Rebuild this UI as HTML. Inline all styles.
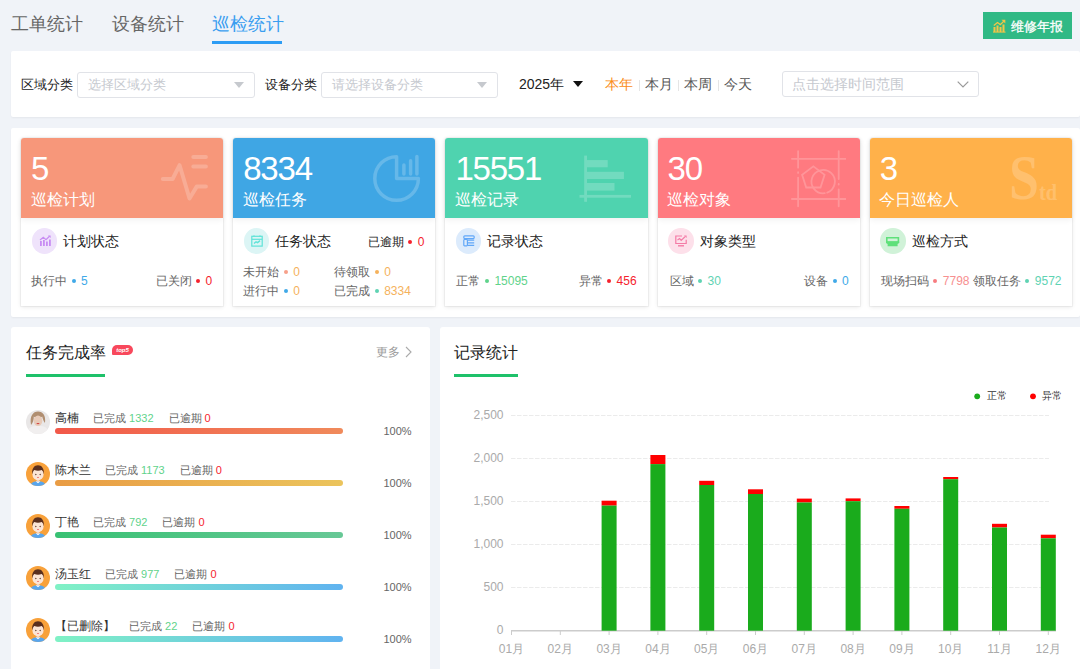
<!DOCTYPE html>
<html><head><meta charset="utf-8">
<style>
*{margin:0;padding:0;box-sizing:border-box}
html,body{width:1080px;height:669px;overflow:hidden}
body{background:#f0f3f8;font-family:"Liberation Sans",sans-serif;position:relative;color:#333}
.a{position:absolute;white-space:nowrap}
.tab{font-size:18px;line-height:24px;color:#666;top:12px}
.panel{position:absolute;background:#fff}
.lbl{font-size:13px;line-height:20px;color:#222;top:75px}
.sel{position:absolute;top:72px;height:26px;border:1px solid #e1e3e8;border-radius:3px;background:#fff}
.ph{position:absolute;left:10px;top:2px;font-size:13px;line-height:20px;color:#c6c9cf;white-space:nowrap}
.tri{position:absolute;width:0;height:0;border-left:5.5px solid transparent;border-right:5.5px solid transparent;border-top:6px solid #c6c9ce}
.q{font-size:14px;line-height:20px;top:74px;color:#555}
.sep{position:absolute;top:80px;width:1px;height:11px;background:#e5e5e5}
.card{position:absolute;top:138px;width:202.2px;height:168px;border-radius:3px 3px 0 0;background:#fff;box-shadow:0 0 0 1px rgba(0,0,0,.035),0 1px 4px rgba(0,0,0,.1)}
.hd{position:absolute;left:0;top:0;width:100%;height:80px;border-radius:3px 3px 0 0;box-shadow:0 2px 6px rgba(0,0,0,.06)}
.num{position:absolute;left:10px;top:12px;font-size:33px;line-height:38px;color:#fff;letter-spacing:-1.2px}
.nm{position:absolute;left:9.5px;top:51px;font-size:16px;line-height:22px;color:#fff;white-space:nowrap}
.ic{position:absolute;left:139px;top:16px}
.cir{position:absolute;left:10.5px;top:90px;width:25.5px;height:25.5px;border-radius:50%}
.cir svg{position:absolute;left:7px;top:7px}
.ttl{position:absolute;left:42px;top:93px;font-size:14px;line-height:20px;color:#222;white-space:nowrap}
.st{position:absolute;font-size:12px;line-height:16px;color:#666;white-space:nowrap}
.dot{display:inline-block;width:4px;height:4px;border-radius:50%;vertical-align:middle;margin:0 5.5px 2.5px 4.5px}
.lrow{font-size:12px;line-height:16px;color:#333}.pn{margin-right:14px}.pl{font-size:11px;color:#666;margin-right:15px}.pl b{font-weight:normal}.pct{font-size:11px;line-height:14px;color:#666}
.ylab{font-size:12px;line-height:16px;color:#aaa;text-align:right}.xlab{width:60px;text-align:center;font-size:12px;line-height:16px;color:#aaa}
</style></head><body>

<!-- tabs -->
<div class="a tab" style="left:11px">工单统计</div>
<div class="a tab" style="left:112px">设备统计</div>
<div class="a tab" style="left:212px;color:#3a9ef0">巡检统计</div>
<div class="a" style="left:212px;top:41px;width:70px;height:3px;background:#2d9cf4"></div>

<!-- button -->
<div class="a" style="left:983px;top:12px;width:89px;height:27px;background:#30b985"></div><svg class="a" style="left:993px;top:19px" width="13" height="14" viewBox="0 0 13 14"><g fill="#f3c546"><rect x="0.5" y="8" width="2" height="5"/><rect x="3.5" y="6.5" width="2" height="6.5"/><rect x="6.5" y="8" width="2" height="5"/><rect x="9.5" y="5.5" width="2" height="7.5"/><rect x="0" y="12.6" width="12.5" height="1"/><path d="M8.5 0.8H12.3V4.6Z"/></g><path d="M0.8 6.5L4.5 3.5L7.3 5.6L11.3 1.8" fill="none" stroke="#f3c546" stroke-width="1.3"/></svg><div class="a" style="left:1011px;top:18px;font-size:13px;line-height:17px;color:#fff;-webkit-text-stroke:0.3px #fff">维修年报</div>

<!-- filter panel -->
<div class="panel" style="left:11px;top:51px;width:1069px;height:66px;border-radius:2px;box-shadow:0 1px 2px rgba(0,0,0,.05)"></div>
<div class="a lbl" style="left:21px">区域分类</div>
<div class="sel" style="left:77px;width:178px"><div class="ph">选择区域分类</div><div class="tri" style="left:156px;top:9px"></div></div>
<div class="a lbl" style="left:265px">设备分类</div>
<div class="sel" style="left:321px;width:177px"><div class="ph">请选择设备分类</div><div class="tri" style="left:155px;top:9px"></div></div>
<div class="a q" style="left:519px;color:#222">2025年</div>
<div class="a" style="left:573px;top:81px;width:0;height:0;border-left:5px solid transparent;border-right:5px solid transparent;border-top:6px solid #111"></div>
<div class="a q" style="left:605px;color:#fa8c16">本年</div>
<div class="sep" style="left:639px"></div>
<div class="a q" style="left:645px">本月</div>
<div class="sep" style="left:678px"></div>
<div class="a q" style="left:684px">本周</div>
<div class="sep" style="left:718px"></div>
<div class="a q" style="left:724px">今天</div>
<div class="sel" style="left:782px;top:71px;width:197px;height:26px"><div class="ph" style="font-size:14px;left:8.5px">点击选择时间范围</div><svg style="position:absolute;left:174px;top:9px" width="12" height="7" viewBox="0 0 12 7"><path d="M0.7 0.7L6 6L11.3 0.7" fill="none" stroke="#999" stroke-width="1.2"/></svg></div>

<!-- cards panel -->
<div class="panel" style="left:11px;top:128px;width:1069px;height:189px;border-radius:2px;box-shadow:0 1px 2px rgba(0,0,0,.05)"></div>

<!-- cards -->
<div class="card" style="left:21.0px"><div class="hd" style="background:#f7977a"><svg width="60" height="60" viewBox="0 0 60 60" style="position:absolute;left:133px;top:10px"><g fill="none" stroke="#fff" opacity="0.2" stroke-width="4" stroke-linecap="round" stroke-linejoin="round"><path d="M39.3 9H51.9M39.3 18.4H51.9"/><path d="M8.8 31H18.6L25.6 17.2L35.5 50.5L42.7 38.6H51.9"/></g></svg><div class="num">5</div><div class="nm">巡检计划</div></div><div class="cir" style="background:#efe3fb"><svg width="12" height="12" viewBox="0 0 12 12"><g fill="#c88cf3"><rect x="1" y="6" width="1.8" height="5"/><rect x="4" y="5" width="1.8" height="6"/><rect x="7" y="6.5" width="1.8" height="4.5"/><rect x="10" y="4.5" width="1.8" height="6.5"/></g><path d="M1 5L4.3 2.2L7 4.6L10.5 1.2" fill="none" stroke="#c88cf3" stroke-width="1.2"/><path d="M9 0.5H11.6V3Z" fill="#c88cf3"/></svg></div><div class="ttl">计划状态</div><div class="st" style="left:10px;top:135px">执行中<span class="dot" style="background:#40a9e8"></span><span style="color:#40a9e8">5</span></div><div class="st" style="right:11px;top:135px">已关闭<span class="dot" style="background:#f5222d"></span><span style="color:#f5222d">0</span></div></div>
<div class="card" style="left:233.2px"><div class="hd" style="background:#3fa6e4"><svg width="60" height="60" viewBox="0 0 60 60" style="position:absolute;left:135px;top:10px"><g fill="none" stroke="#fff" opacity="0.2" stroke-width="3.5" stroke-linecap="round" stroke-linejoin="round"><path d="M28.6 8.7A21.8 21.8 0 1 0 50.4 30.5H28.6V8.7"/><path d="M35.9 17V26M42.6 12.7V26M48.9 8.6V26"/></g></svg><div class="num">8334</div><div class="nm">巡检任务</div></div><div class="cir" style="background:#dcf5f5"><svg width="12" height="12" viewBox="0 0 12 12"><g fill="none" stroke="#5fe3d8" stroke-width="1.2"><rect x="0.8" y="1.3" width="10.4" height="9.8"/><path d="M0.8 4.3H11.2"/><path d="M3 8.6L5 6.8L6.6 7.6L9 5.6" stroke-width="1.4"/></g><path d="M3 0.3V1.8M9 0.3V1.8" stroke="#5fe3d8" stroke-width="1"/></svg></div><div class="ttl">任务状态</div><div class="st" style="right:11px;top:96px;color:#222">已逾期<span class="dot" style="background:#f5222d"></span><span style="color:#f5222d">0</span></div><div class="st" style="left:10px;top:126px">未开始<span class="dot" style="background:#f7a08a"></span><span style="color:#f5b25c">0</span></div><div class="st" style="left:101px;top:126px">待领取<span class="dot" style="background:#f5b25c"></span><span style="color:#f5b25c">0</span></div><div class="st" style="left:10px;top:145px">进行中<span class="dot" style="background:#40a9e8"></span><span style="color:#f5b25c">0</span></div><div class="st" style="left:101px;top:145px">已完成<span class="dot" style="background:#5fd3b3"></span><span style="color:#f5b25c">8334</span></div></div>
<div class="card" style="left:445.4px"><div class="hd" style="background:#4fd3af"><svg width="60" height="60" viewBox="0 0 60 60" style="position:absolute;left:130px;top:10px"><g fill="#fff" opacity="0.2"><rect x="9.2" y="7.6" width="2.8" height="46.2"/><rect x="4.5" y="46.9" width="51.5" height="2.8"/><rect x="12" y="12.1" width="20.7" height="7.2"/><rect x="12" y="23.8" width="36.9" height="7.2"/><rect x="12" y="35" width="27.5" height="7.6"/></g></svg><div class="num">15551</div><div class="nm">巡检记录</div></div><div class="cir" style="background:#dcebfc"><svg width="12" height="12" viewBox="0 0 12 12"><g fill="none" stroke="#62a8f8" stroke-width="1.2"><rect x="0.8" y="0.8" width="10.4" height="2.8" rx="1"/><rect x="0.8" y="4.5" width="3.6" height="6.3" rx="0.8"/><path d="M4.4 5.2H11.2M4.4 7.8H11.2M4.4 10.4H11.2"/></g></svg></div><div class="ttl">记录状态</div><div class="st" style="left:11px;top:135px">正常<span class="dot" style="background:#5fd38b"></span><span style="color:#5fd38b">15095</span></div><div class="st" style="right:11px;top:135px">异常<span class="dot" style="background:#f5222d"></span><span style="color:#f5222d">456</span></div></div>
<div class="card" style="left:657.6px"><div class="hd" style="background:#ff7a80"><svg width="60" height="60" viewBox="0 0 60 60" style="position:absolute;left:128px;top:10px"><g fill="none" stroke="#fff" opacity="0.2" stroke-width="1.8" stroke-linecap="round"><path d="M5.9 10.8H60.1M5.9 51H60.1M12.1 3.1V19.7M12.1 24.2V24.9M12.1 29.6V58.3M52.7 3.1V31M52.7 35.9V36.6M52.7 41.3V58.3"/><path d="M27.4 18.4L38.6 26.9L34.5 39.5H20.2L16.1 26.9Z"/><path d="M38.8 45.2A11.7 11.7 0 1 1 41.2 44.6"/></g></svg><div class="num">30</div><div class="nm">巡检对象</div></div><div class="cir" style="background:#fde0ea"><svg width="12" height="12" viewBox="0 0 12 12"><g fill="none" stroke="#f47ba6" stroke-width="1.2"><path d="M7 1H0.8V8.5H11.2V4.8"/><path d="M2.5 5L4.6 3.6L6.2 5.4L10 1.8"/><path d="M3 10.8H9" stroke-width="1.4"/></g><path d="M9 0.5H11.6V3Z" fill="#f47ba6"/></svg></div><div class="ttl">对象类型</div><div class="st" style="left:12px;top:135px">区域<span class="dot" style="background:#5fd3b3"></span><span style="color:#5fd3b3">30</span></div><div class="st" style="right:11px;top:135px">设备<span class="dot" style="background:#40a9e8"></span><span style="color:#40a9e8">0</span></div></div>
<div class="card" style="left:869.8px"><div class="hd" style="background:#ffb14a"><div style="position:absolute;left:140px;top:0;width:60px;height:80px;font-family:'Liberation Serif',serif;color:rgba(255,255,255,0.2)"><span style="position:absolute;left:-0.5px;top:8px;font-size:64px;line-height:64px;font-weight:bold;transform:scaleX(0.84);transform-origin:0 0">S</span><span style="position:absolute;left:29.5px;top:42px;font-size:24px;line-height:24px;font-weight:bold;transform:scaleX(0.85);transform-origin:0 0">td</span></div><div class="num">3</div><div class="nm">今日巡检人</div></div><div class="cir" style="background:#d0f2d8"><svg width="14" height="10" viewBox="0 0 14 10" style="left:6px;top:8.5px"><path d="M0.8 0.8H12.4V5H0.8Z" fill="none" stroke="#5ee07a" stroke-width="1.6"/><path d="M0 4.4H13.2V6L11.6 7V9.2H1.6V7L0 6Z" fill="#5ee07a"/></svg></div><div class="ttl">巡检方式</div><div class="st" style="left:11px;top:135px">现场扫码<span class="dot" style="background:#f77c80"></span><span style="color:#f79090">7798</span> 领取任务<span class="dot" style="background:#5fd3b3"></span><span style="color:#5fd3b3">9572</span></div></div>

<!-- bottom panels -->
<div class="panel" style="left:11px;top:327px;width:419px;height:350px;border-radius:3px"></div>
<div class="panel" style="left:440px;top:327px;width:645px;height:350px;border-radius:3px"></div>

<!-- left list -->
<div class="a" style="left:26px;top:343px;font-size:16px;line-height:20px;color:#222">任务完成率</div>
<div class="a" style="left:112px;top:345px;width:21px;height:10px;border-radius:5px 5px 5px 1px;background:#f8485c;color:#fff;font-size:6px;line-height:10px;text-align:center;font-style:italic;font-weight:bold">top5</div>
<div class="a" style="left:26px;top:374px;width:79px;height:3px;background:#1ec16a"></div>
<div class="a" style="left:376px;top:344px;font-size:12px;line-height:16px;color:#999">更多</div>
<svg class="a" style="left:404px;top:346px" width="9" height="12" viewBox="0 0 9 12"><path d="M2 1L7 6L2 11" fill="none" stroke="#aaa" stroke-width="1.1"/></svg>
<div class="a" style="left:26px;top:409.7px;width:24px;height:24px"><svg width="24" height="24" viewBox="0 0 24 24"><defs><clipPath id="cp"><circle cx="12" cy="12" r="12"/></clipPath></defs><g clip-path="url(#cp)"><rect width="24" height="24" fill="#e9e7e7"/><path d="M-1 25C1 18 6 15.5 12 16C18 15.5 23 18 25 25Z" fill="#f1efef"/><path d="M5 15C3.5 6 7 1.5 12 1.5C17 1.5 20 5.5 19 13C17.5 11 16.5 8.5 16.2 6.5C14 8.5 10 8.5 7.8 6.5C7.8 10 7 13 5 15Z" fill="#b08e70"/><ellipse cx="12" cy="10.8" rx="4.3" ry="5.2" fill="#e8cbb9"/><path d="M10.7 13.6H13.3" stroke="#d23a3a" stroke-width="1"/></g></svg></div>
<div class="a lrow" style="left:55px;top:409.7px"><span class="pn">高楠</span><span class="pl">已完成 <b style="color:#5fd38b">1332</b></span><span class="pl">已逾期 <b style="color:#f5222d">0</b></span></div>
<div class="a" style="left:55px;top:428.0px;width:288px;height:6px;border-radius:3px;background:linear-gradient(90deg,#f25849,#f08a5b)"></div>
<div class="a pct" style="left:383.5px;top:423.7px">100%</div>
<div class="a" style="left:26px;top:461.7px;width:24px;height:24px"><svg width="24" height="24" viewBox="0 0 24 24"><defs><clipPath id="cb1"><circle cx="12" cy="12" r="12"/></clipPath></defs><g clip-path="url(#cb1)"><rect width="24" height="24" fill="#f8a13a"/><path d="M4 24.5C4.5 20.5 8 19.3 12 19.3C16 19.3 19.5 20.5 20 24.5Z" fill="#58a6ee"/><path d="M9.6 19.2L12 21.3L14.4 19.2Z" fill="#fff"/><rect x="10.6" y="16" width="2.8" height="3.5" fill="#f1c9b0"/><ellipse cx="12" cy="12.2" rx="5.6" ry="6.2" fill="#fbe5d6"/><path d="M6.2 12.5C5.5 6.5 8.3 3.2 12 3.2C15.7 3.2 18.5 6.5 17.8 12.5C17.3 9.5 16.5 8.3 15.6 8C13.5 9 10.5 9 8.4 8C7.5 8.5 6.7 9.8 6.2 12.5Z" fill="#5a2f1e"/><circle cx="9.8" cy="12.6" r="0.75" fill="#6b4a3a"/><circle cx="14.2" cy="12.6" r="0.75" fill="#6b4a3a"/><path d="M11 15.3Q12 16 13 15.3" stroke="#e66" stroke-width="0.8" fill="none"/></g></svg></div>
<div class="a lrow" style="left:55px;top:461.7px"><span class="pn">陈木兰</span><span class="pl">已完成 <b style="color:#5fd38b">1173</b></span><span class="pl">已逾期 <b style="color:#f5222d">0</b></span></div>
<div class="a" style="left:55px;top:480.0px;width:288px;height:6px;border-radius:3px;background:linear-gradient(90deg,#e99c44,#ebc45c)"></div>
<div class="a pct" style="left:383.5px;top:475.7px">100%</div>
<div class="a" style="left:26px;top:513.7px;width:24px;height:24px"><svg width="24" height="24" viewBox="0 0 24 24"><defs><clipPath id="cb2"><circle cx="12" cy="12" r="12"/></clipPath></defs><g clip-path="url(#cb2)"><rect width="24" height="24" fill="#f8a13a"/><path d="M4 24.5C4.5 20.5 8 19.3 12 19.3C16 19.3 19.5 20.5 20 24.5Z" fill="#58a6ee"/><path d="M9.6 19.2L12 21.3L14.4 19.2Z" fill="#fff"/><rect x="10.6" y="16" width="2.8" height="3.5" fill="#f1c9b0"/><ellipse cx="12" cy="12.2" rx="5.6" ry="6.2" fill="#fbe5d6"/><path d="M6.2 12.5C5.5 6.5 8.3 3.2 12 3.2C15.7 3.2 18.5 6.5 17.8 12.5C17.3 9.5 16.5 8.3 15.6 8C13.5 9 10.5 9 8.4 8C7.5 8.5 6.7 9.8 6.2 12.5Z" fill="#5a2f1e"/><circle cx="9.8" cy="12.6" r="0.75" fill="#6b4a3a"/><circle cx="14.2" cy="12.6" r="0.75" fill="#6b4a3a"/><path d="M11 15.3Q12 16 13 15.3" stroke="#e66" stroke-width="0.8" fill="none"/></g></svg></div>
<div class="a lrow" style="left:55px;top:513.7px"><span class="pn">丁艳</span><span class="pl">已完成 <b style="color:#5fd38b">792</b></span><span class="pl">已逾期 <b style="color:#f5222d">0</b></span></div>
<div class="a" style="left:55px;top:532.0px;width:288px;height:6px;border-radius:3px;background:linear-gradient(90deg,#38c173,#67c896)"></div>
<div class="a pct" style="left:383.5px;top:527.7px">100%</div>
<div class="a" style="left:26px;top:565.7px;width:24px;height:24px"><svg width="24" height="24" viewBox="0 0 24 24"><defs><clipPath id="cb3"><circle cx="12" cy="12" r="12"/></clipPath></defs><g clip-path="url(#cb3)"><rect width="24" height="24" fill="#f8a13a"/><path d="M4 24.5C4.5 20.5 8 19.3 12 19.3C16 19.3 19.5 20.5 20 24.5Z" fill="#58a6ee"/><path d="M9.6 19.2L12 21.3L14.4 19.2Z" fill="#fff"/><rect x="10.6" y="16" width="2.8" height="3.5" fill="#f1c9b0"/><ellipse cx="12" cy="12.2" rx="5.6" ry="6.2" fill="#fbe5d6"/><path d="M6.2 12.5C5.5 6.5 8.3 3.2 12 3.2C15.7 3.2 18.5 6.5 17.8 12.5C17.3 9.5 16.5 8.3 15.6 8C13.5 9 10.5 9 8.4 8C7.5 8.5 6.7 9.8 6.2 12.5Z" fill="#5a2f1e"/><circle cx="9.8" cy="12.6" r="0.75" fill="#6b4a3a"/><circle cx="14.2" cy="12.6" r="0.75" fill="#6b4a3a"/><path d="M11 15.3Q12 16 13 15.3" stroke="#e66" stroke-width="0.8" fill="none"/></g></svg></div>
<div class="a lrow" style="left:55px;top:565.7px"><span class="pn">汤玉红</span><span class="pl">已完成 <b style="color:#5fd38b">977</b></span><span class="pl">已逾期 <b style="color:#f5222d">0</b></span></div>
<div class="a" style="left:55px;top:584.0px;width:288px;height:6px;border-radius:3px;background:linear-gradient(90deg,#80f2c5,#60b3f0)"></div>
<div class="a pct" style="left:383.5px;top:579.7px">100%</div>
<div class="a" style="left:26px;top:617.7px;width:24px;height:24px"><svg width="24" height="24" viewBox="0 0 24 24"><defs><clipPath id="cb4"><circle cx="12" cy="12" r="12"/></clipPath></defs><g clip-path="url(#cb4)"><rect width="24" height="24" fill="#f8a13a"/><path d="M4 24.5C4.5 20.5 8 19.3 12 19.3C16 19.3 19.5 20.5 20 24.5Z" fill="#58a6ee"/><path d="M9.6 19.2L12 21.3L14.4 19.2Z" fill="#fff"/><rect x="10.6" y="16" width="2.8" height="3.5" fill="#f1c9b0"/><ellipse cx="12" cy="12.2" rx="5.6" ry="6.2" fill="#fbe5d6"/><path d="M6.2 12.5C5.5 6.5 8.3 3.2 12 3.2C15.7 3.2 18.5 6.5 17.8 12.5C17.3 9.5 16.5 8.3 15.6 8C13.5 9 10.5 9 8.4 8C7.5 8.5 6.7 9.8 6.2 12.5Z" fill="#5a2f1e"/><circle cx="9.8" cy="12.6" r="0.75" fill="#6b4a3a"/><circle cx="14.2" cy="12.6" r="0.75" fill="#6b4a3a"/><path d="M11 15.3Q12 16 13 15.3" stroke="#e66" stroke-width="0.8" fill="none"/></g></svg></div>
<div class="a lrow" style="left:55px;top:617.7px"><span class="pn">【已删除】</span><span class="pl">已完成 <b style="color:#5fd38b">22</b></span><span class="pl">已逾期 <b style="color:#f5222d">0</b></span></div>
<div class="a" style="left:55px;top:636.0px;width:288px;height:6px;border-radius:3px;background:linear-gradient(90deg,#80f2c5,#60b3f0)"></div>
<div class="a pct" style="left:383.5px;top:631.7px">100%</div>
<!-- chart -->
<div class="a" style="left:454px;top:343px;font-size:16px;line-height:20px;color:#222">记录统计</div>
<div class="a" style="left:454px;top:374px;width:64px;height:3px;background:#1ec16a"></div>
<svg class="a" style="left:0;top:0" width="1080" height="669" viewBox="0 0 1080 669"><line x1="511" y1="587.5" x2="1049" y2="587.5" stroke="#ebebeb" stroke-width="1" stroke-dasharray="4.5 1.5"/><line x1="511" y1="544.5" x2="1049" y2="544.5" stroke="#ebebeb" stroke-width="1" stroke-dasharray="4.5 1.5"/><line x1="511" y1="501.5" x2="1049" y2="501.5" stroke="#ebebeb" stroke-width="1" stroke-dasharray="4.5 1.5"/><line x1="511" y1="458.5" x2="1049" y2="458.5" stroke="#ebebeb" stroke-width="1" stroke-dasharray="4.5 1.5"/><line x1="511" y1="415.5" x2="1049" y2="415.5" stroke="#ebebeb" stroke-width="1" stroke-dasharray="4.5 1.5"/><line x1="511" y1="630.7" x2="1056" y2="630.7" stroke="#cccccc" stroke-width="1.5"/><line x1="511.5" y1="630.7" x2="511.5" y2="635" stroke="#cccccc" stroke-width="1"/><line x1="560.3" y1="630.7" x2="560.3" y2="635" stroke="#cccccc" stroke-width="1"/><line x1="609.1" y1="630.7" x2="609.1" y2="635" stroke="#cccccc" stroke-width="1"/><line x1="657.9" y1="630.7" x2="657.9" y2="635" stroke="#cccccc" stroke-width="1"/><line x1="706.7" y1="630.7" x2="706.7" y2="635" stroke="#cccccc" stroke-width="1"/><line x1="755.5" y1="630.7" x2="755.5" y2="635" stroke="#cccccc" stroke-width="1"/><line x1="804.3" y1="630.7" x2="804.3" y2="635" stroke="#cccccc" stroke-width="1"/><line x1="853.1" y1="630.7" x2="853.1" y2="635" stroke="#cccccc" stroke-width="1"/><line x1="901.9" y1="630.7" x2="901.9" y2="635" stroke="#cccccc" stroke-width="1"/><line x1="950.7" y1="630.7" x2="950.7" y2="635" stroke="#cccccc" stroke-width="1"/><line x1="999.5" y1="630.7" x2="999.5" y2="635" stroke="#cccccc" stroke-width="1"/><line x1="1048.3" y1="630.7" x2="1048.3" y2="635" stroke="#cccccc" stroke-width="1"/><rect x="601.6" y="500.7" width="15" height="4.9" fill="#ff0000"/><rect x="601.6" y="505.6" width="15" height="125.1" fill="#1aab1c"/><rect x="650.4" y="455" width="15" height="9.1" fill="#ff0000"/><rect x="650.4" y="464.1" width="15" height="166.6" fill="#1aab1c"/><rect x="699.2" y="480.8" width="15" height="4.2" fill="#ff0000"/><rect x="699.2" y="485" width="15" height="145.7" fill="#1aab1c"/><rect x="748.0" y="489.3" width="15" height="4.7" fill="#ff0000"/><rect x="748.0" y="494" width="15" height="136.7" fill="#1aab1c"/><rect x="796.8" y="498.6" width="15" height="3.9" fill="#ff0000"/><rect x="796.8" y="502.5" width="15" height="128.2" fill="#1aab1c"/><rect x="845.6" y="498.4" width="15" height="2.8" fill="#ff0000"/><rect x="845.6" y="501.2" width="15" height="129.5" fill="#1aab1c"/><rect x="894.4" y="506" width="15" height="2.8" fill="#ff0000"/><rect x="894.4" y="508.8" width="15" height="121.9" fill="#1aab1c"/><rect x="943.2" y="477" width="15" height="2.2" fill="#ff0000"/><rect x="943.2" y="479.2" width="15" height="151.5" fill="#1aab1c"/><rect x="992.0" y="523.8" width="15" height="3.7" fill="#ff0000"/><rect x="992.0" y="527.5" width="15" height="103.2" fill="#1aab1c"/><rect x="1040.8" y="534.7" width="15" height="3.6" fill="#ff0000"/><rect x="1040.8" y="538.3" width="15" height="92.4" fill="#1aab1c"/><circle cx="977.2" cy="396.3" r="2.9" fill="#1aab1c"/><circle cx="1033" cy="396.3" r="2.9" fill="#ff0000"/></svg>
<div class="a ylab" style="right:576.5px;top:622.0px">0</div>
<div class="a ylab" style="right:576.5px;top:578.5px">500</div>
<div class="a ylab" style="right:576.5px;top:535.5px">1,000</div>
<div class="a ylab" style="right:576.5px;top:492.5px">1,500</div>
<div class="a ylab" style="right:576.5px;top:449.5px">2,000</div>
<div class="a ylab" style="right:576.5px;top:406.5px">2,500</div>
<div class="a xlab" style="left:481.5px;top:640.8px">01月</div>
<div class="a xlab" style="left:530.3px;top:640.8px">02月</div>
<div class="a xlab" style="left:579.1px;top:640.8px">03月</div>
<div class="a xlab" style="left:627.9px;top:640.8px">04月</div>
<div class="a xlab" style="left:676.7px;top:640.8px">05月</div>
<div class="a xlab" style="left:725.5px;top:640.8px">06月</div>
<div class="a xlab" style="left:774.3px;top:640.8px">07月</div>
<div class="a xlab" style="left:823.1px;top:640.8px">08月</div>
<div class="a xlab" style="left:871.9px;top:640.8px">09月</div>
<div class="a xlab" style="left:920.7px;top:640.8px">10月</div>
<div class="a xlab" style="left:969.5px;top:640.8px">11月</div>
<div class="a xlab" style="left:1018.3px;top:640.8px">12月</div>
<div class="a" style="left:987px;top:389px;font-size:10px;line-height:14px;color:#333">正常</div>
<div class="a" style="left:1042px;top:389px;font-size:10px;line-height:14px;color:#333">异常</div>
</body></html>
